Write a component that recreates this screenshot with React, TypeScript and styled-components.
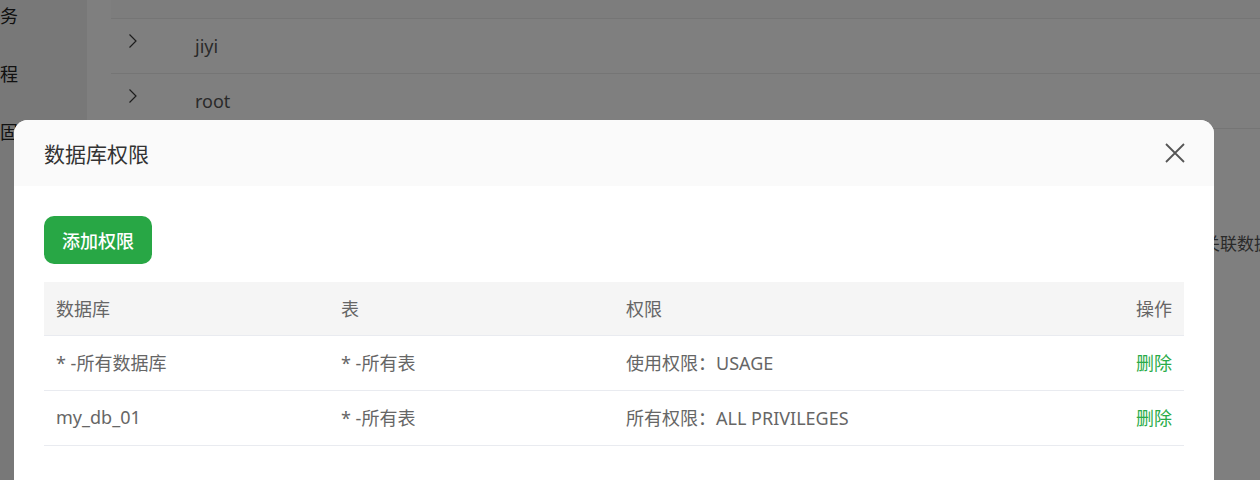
import React, { FC } from 'react';
import styled, { createGlobalStyle } from 'styled-components';

const GlobalStyle = createGlobalStyle`
  * { box-sizing: border-box; }
  html, body { margin: 0; padding: 0; }
  body {
    width: 1260px;
    height: 480px;
    overflow: hidden;
    background: #fff;
    font-family: "Noto Sans", "Noto Sans CJK SC", sans-serif;
  }
`;

const StyledPage = styled.div`
  display: flex;
  width: 1260px;
  height: 480px;
  overflow: hidden;
`;

const StyledSidebar = styled.ul`
  flex: 0 0 87px;
  margin: 0;
  padding: 0;
  list-style: none;
  background: #f0f0f0;
  overflow: hidden;
`;

const StyledSideItem = styled.li`
  height: 58px;
  line-height: 32px;
  margin-left: -18px;
  font-size: 18px;
  color: #222;
  white-space: nowrap;
`;

const StyledMain = styled.div`
  flex: 1;
  padding: 0 0 0 24px;
`;

const StyledListHead = styled.div`
  height: 19px;
  background: #fafafa;
  border-bottom: 1px solid #eaeaea;
`;

const StyledListRow = styled.div`
  display: flex;
  align-items: center;
  height: 55px;
  border-bottom: 1px solid #eaeaea;
  font-size: 18px;
  color: #555;
`;

const StyledArrow = styled.span`
  display: flex;
  width: 84px;
  padding-left: 17px;
  margin-top: -10px;
`;

const StyledInfoLine = styled.div`
  margin-top: 101px;
  padding-left: 1075px;
  font-size: 17px;
  color: #555;
  white-space: nowrap;
`;

const StyledOverlay = styled.div`
  position: fixed;
  inset: 0;
  background: rgba(0, 0, 0, 0.5);
`;

const StyledModal = styled.div`
  position: fixed;
  top: 120px;
  left: 14px;
  width: 1200px;
  height: 420px;
  background: #fff;
  border-radius: 14px;
  overflow: hidden;
`;

const StyledModalHeader = styled.div`
  display: flex;
  align-items: center;
  justify-content: space-between;
  height: 66px;
  padding: 0 29px 0 30px;
  background: #fafafa;
`;

const StyledModalTitle = styled.h2`
  margin: 0;
  font-size: 21px;
  font-weight: 400;
  color: #333;
`;

const StyledClose = styled.button`
  display: flex;
  padding: 0;
  border: none;
  background: none;
  cursor: pointer;
`;

const StyledModalBody = styled.div`
  padding: 30px 30px 0 30px;
`;

const StyledAddButton = styled.button`
  height: 48px;
  padding: 0 18px;
  border: none;
  border-radius: 10px;
  background: #28a745;
  color: #fff;
  font-family: inherit;
  font-size: 18px;
  font-weight: 500;
  cursor: pointer;
`;

const StyledTable = styled.div`
  margin-top: 18px;
  width: 1140px;
`;

const StyledTableRow = styled.div<{ $head?: boolean }>`
  display: grid;
  grid-template-columns: repeat(4, 1fr);
  align-items: center;
  height: ${p => (p.$head ? '54px' : '55px')};
  padding-bottom: 2px;
  background: ${p => (p.$head ? '#f5f5f5' : '#fff')};
  border-bottom: 1px solid #e9ebf0;
  font-size: 18px;
  color: #666;
`;

const StyledCell = styled.div<{ $right?: boolean }>`
  padding: 0 12px;
  text-align: ${p => (p.$right ? 'right' : 'left')};
  white-space: nowrap;
`;

const StyledDelete = styled.a`
  color: #2aab48;
  text-decoration: none;
  cursor: pointer;
`;

const rows = [
  { db: '* -所有数据库', table: '* -所有表', perm: '使用权限：USAGE' },
  { db: 'my_db_01', table: '* -所有表', perm: '所有权限：ALL PRIVILEGES' },
];

const Chevron: FC = () => (
  <svg width="10" height="16" viewBox="0 0 10 16">
    <path d="M1.5 1.5 L8 8 L1.5 14.5" stroke="#3a3a3a" strokeWidth="1.2" fill="none" />
  </svg>
);

const App: FC = () => {
  return (
    <>
      <GlobalStyle />
      <StyledPage>
        <StyledSidebar>
          <StyledSideItem>服务</StyledSideItem>
          <StyledSideItem>流程</StyledSideItem>
          <StyledSideItem>稳固</StyledSideItem>
        </StyledSidebar>
        <StyledMain>
          <StyledListHead />
          <StyledListRow>
            <StyledArrow><Chevron /></StyledArrow>jiyi
          </StyledListRow>
          <StyledListRow>
            <StyledArrow><Chevron /></StyledArrow>root
          </StyledListRow>
          <StyledInfoLine>已关联数据库</StyledInfoLine>
        </StyledMain>
      </StyledPage>
      <StyledOverlay />
      <StyledModal>
        <StyledModalHeader>
          <StyledModalTitle>数据库权限</StyledModalTitle>
          <StyledClose aria-label="关闭">
            <svg width="20" height="20" viewBox="0 0 20 20">
              <path d="M1 1 L19 19 M19 1 L1 19" stroke="#555" strokeWidth="1.8" fill="none" />
            </svg>
          </StyledClose>
        </StyledModalHeader>
        <StyledModalBody>
          <StyledAddButton>添加权限</StyledAddButton>
          <StyledTable>
            <StyledTableRow $head>
              <StyledCell>数据库</StyledCell>
              <StyledCell>表</StyledCell>
              <StyledCell>权限</StyledCell>
              <StyledCell $right>操作</StyledCell>
            </StyledTableRow>
            {rows.map(r => (
              <StyledTableRow key={r.db}>
                <StyledCell>{r.db}</StyledCell>
                <StyledCell>{r.table}</StyledCell>
                <StyledCell>{r.perm}</StyledCell>
                <StyledCell $right>
                  <StyledDelete>删除</StyledDelete>
                </StyledCell>
              </StyledTableRow>
            ))}
          </StyledTable>
        </StyledModalBody>
      </StyledModal>
    </>
  );
};

export default App;
